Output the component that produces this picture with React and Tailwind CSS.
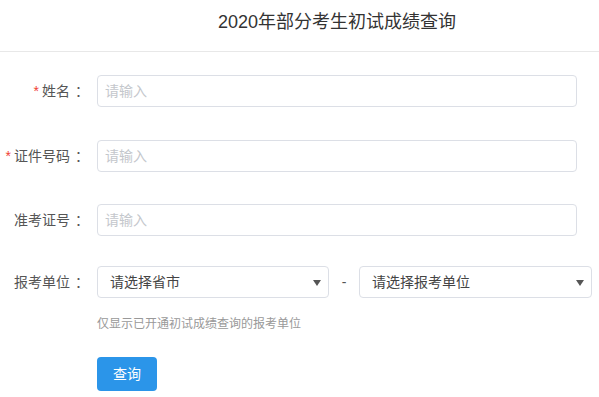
const font = { fontFamily: '"Liberation Sans", "Noto Sans CJK SC", sans-serif' };

const Label = ({ required, children }) => (
  <div className="w-[84px] shrink-0 text-right text-[14px] text-[#555] whitespace-nowrap">
    {required && <span className="text-[#f04134] mr-[3px]">*</span>}
    {children}
    <span className="inline-block w-[14px] pl-[5px] text-left overflow-visible">：</span>
  </div>
);

const TextInput = () => (
  <input
    className="ml-[13px] w-[480px] h-[32px] px-[7px] rounded-[4px] border border-[#dcdfe6] text-[14px] text-[#333] placeholder:text-[#c4c7cc] outline-none"
    placeholder="请输入"
  />
);

const Select = ({ text, width }) => (
  <div
    className={`relative h-[32px] rounded-[4px] border border-[#dcdfe6] flex items-center pl-[12px] text-[14px] text-[#444] ${width}`}
  >
    {text}
    <svg className="absolute right-[7px] top-[13px]" width="8" height="6" viewBox="0 0 8 6">
      <path d="M0 0 H8 L4 6 Z" fill="#555" />
    </svg>
  </div>
);

export default function App() {
  return (
    <div className="w-[599px] h-[397px] bg-white overflow-hidden" style={font}>
      <header className="h-[52px] border-b border-[#e8e8e8] flex items-center pl-[218px] pb-[6px]">
        <h1 className="text-[18px] text-[#333] font-normal">2020年部分考生初试成绩查询</h1>
      </header>

      <form className="pt-[23px] flex flex-col">
        <div className="flex items-center">
          <Label required>姓名</Label>
          <TextInput />
        </div>
        <div className="flex items-center mt-[33px]">
          <Label required>证件号码</Label>
          <TextInput />
        </div>
        <div className="flex items-center mt-[32px]">
          <Label>准考证号</Label>
          <TextInput />
        </div>
        <div className="flex items-center mt-[30px]">
          <Label>报考单位</Label>
          <div className="ml-[13px] flex items-center">
            <Select text="请选择省市" width="w-[232px]" />
            <span className="w-[30px] text-center text-[14px] text-[#555]">-</span>
            <Select text="请选择报考单位" width="w-[233px]" />
          </div>
        </div>
        <p className="ml-[97px] mt-[17px] text-[12px] text-[#999]">仅显示已开通初试成绩查询的报考单位</p>
        <div className="ml-[97px] mt-[24px]">
          <button
            type="button"
            className="w-[60px] h-[34px] rounded-[4px] bg-[#2b95e9] text-white text-[14px]"
          >
            查询
          </button>
        </div>
      </form>
    </div>
  );
}
